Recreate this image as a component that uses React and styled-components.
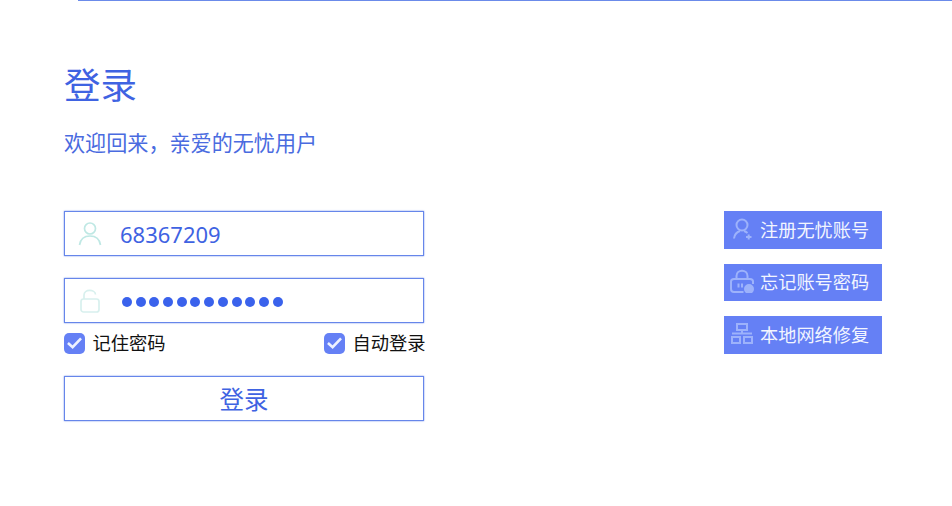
import React from 'react';
import styled, { createGlobalStyle } from 'styled-components';

const GlobalStyle = createGlobalStyle`
	html, body {
		margin: 0;
		padding: 0;
		background: #fff;
	}
	body {
		font-family: "Noto Sans", "Noto Sans CJK SC", sans-serif;
	}
`;

const Page = styled.div`
	width: 952px;
	height: 506px;
	overflow: hidden;
	box-sizing: border-box;
	padding-left: 64px;
	background: #fff;
`;

const TopLine = styled.div`
	height: 1px;
	margin-left: 14px;
	background: #6b8bea;
`;

const Title = styled.h1`
	margin: 59px 0 0;
	height: 50px;
	font-size: 36.5px;
	line-height: 50px;
	font-weight: 400;
	color: #3f63e2;
`;

const Subtitle = styled.p`
	margin: 17px 0 0;
	height: 32px;
	font-size: 21.1px;
	line-height: 32px;
	color: #4a6be0;
`;

const Columns = styled.div`
	display: flex;
	justify-content: space-between;
	align-items: flex-start;
	width: 818px;
	margin-top: 52px;
`;

const Form = styled.form`
	display: flex;
	flex-direction: column;
	width: 360px;
`;

const Field = styled.label`
	display: flex;
	align-items: center;
	box-sizing: border-box;
	height: 45px;
	margin-bottom: ${(p) => p.$gap}px;
	padding-left: 12px;
	border: 1px solid #6686ea;
	box-shadow: 0 0 1.5px #6d8be8;
	background: #fff;
`;

const FieldIcon = styled.svg`
	flex: none;
	width: 26px;
	height: 26px;
	margin-right: 17px;
	fill: none;
	stroke: ${(p) => p.$color};
	stroke-width: 1.7;
`;

const FieldInput = styled.input`
	flex: 1;
	min-width: 0;
	padding: 0;
	border: 0;
	outline: 0;
	background: transparent;
	font-family: "Noto Sans", "Noto Sans CJK SC", sans-serif;
	font-size: 22px;
	color: #3f63e2;
`;

const Dots = styled.div`
	display: flex;
	gap: 3.7px;
	padding: 2px 0 0 2px;
`;

const Dot = styled.span`
	width: 10px;
	height: 10px;
	border-radius: 50%;
	background: #3a62ec;
`;

const Options = styled.div`
	display: flex;
	justify-content: space-between;
	height: 22px;
	margin: 9px -1.5px 22px 0;
`;

const Check = styled.label`
	display: flex;
	align-items: center;
	gap: 7.4px;
	font-size: 18.3px;
	line-height: 22px;
	color: #111;
`;

const CheckBox = styled.span`
	display: flex;
	align-items: center;
	justify-content: center;
	width: 21px;
	height: 21px;
	border-radius: 5px;
	background: #6580f5;
`;

const SubmitButton = styled.button`
	box-sizing: border-box;
	height: 45px;
	padding: 0;
	border: 1px solid #6686ea;
	box-shadow: 0 0 1.5px #6d8be8;
	background: #fff;
	font-family: "Noto Sans CJK SC", sans-serif;
	font-size: 24.5px;
	color: #3f63e2;
`;

const SideLinks = styled.div`
	display: flex;
	flex-direction: column;
	gap: 15px;
	width: 158px;
`;

const SideLink = styled.a`
	display: flex;
	align-items: center;
	gap: 6px;
	box-sizing: border-box;
	height: 37.5px;
	padding: 0 0 2px 6px;
	background: #6580f5;
	font-size: 18.2px;
	color: #f2f5ff;
`;

const SideIcon = styled.svg`
	flex: none;
	width: 24px;
	height: 24px;
	fill: none;
	stroke: #9db2fb;
	stroke-width: 2;
`;

const CheckMark = () => (
	<svg width='17' height='14' viewBox='0 0 18 15'>
		<path d='M2 7.5 L7 12 L16 2.5' fill='none' stroke='#eef2ff' strokeWidth='2.8' />
	</svg>
);

const links = [
	{
		label: '注册无忧账号',
		icon: (
			<>
				<circle cx='12' cy='8' r='5.5' />
				<path d='M4 21.5 C4.5 17.5 7 15 10 14 M14 14 C15.5 14.5 16.5 15.2 17.5 16' />
				<path d='M16 20 H21.5 M18.7 17.5 V22.5' />
			</>
		)
	},
	{
		label: '忘记账号密码',
		icon: (
			<>
				<path d='M6.5 10 V7 C6.5 0 17.5 0 17.5 7 V10' />
				<path d='M13.5 23 H4 C2 23 1 22 1 20 V12.5 C1 11 2 10 4 10 H20 C22 10 23 11 23 12.5 V15' />
				<circle cx='19' cy='20' r='4' fill='#9db2fb' />
				<path d='M8.5 14.5 V18.5 M12 14.5 V18.5' />
			</>
		)
	},
	{
		label: '本地网络修复',
		icon: (
			<>
				<rect x='7' y='2' width='10' height='6' />
				<rect x='2' y='15' width='8' height='6' />
				<rect x='14' y='15' width='8' height='6' />
				<path d='M12 8 V11.5 M2 11.5 H22' />
			</>
		)
	}
];

const App = () => (
	<Page>
		<GlobalStyle />
		<TopLine />
		<Title>登录</Title>
		<Subtitle>欢迎回来，亲爱的无忧用户</Subtitle>
		<Columns>
			<Form>
				<Field $gap={22}>
					<FieldIcon viewBox='0 0 26 26' $color='#bfe8e4'>
						<circle cx='13' cy='7.5' r='5.5' />
						<path d='M2.5 24 C3.5 17.5 8 15 13 15 C18 15 22.5 17.5 23.5 24' />
					</FieldIcon>
					<FieldInput readOnly value='68367209' />
				</Field>
				<Field $gap={0}>
					<FieldIcon viewBox='0 0 26 26' $color='#d8f0ee'>
						<path d='M7 11 V7 C7 1 18 1 18.5 6.5' />
						<rect x='4' y='11' width='18' height='13' rx='2.5' />
					</FieldIcon>
					<Dots>
						{Array.from({ length: 12 }, (_, i) => (
							<Dot key={i} />
						))}
					</Dots>
				</Field>
				<Options>
					<Check>
						<CheckBox>
							<CheckMark />
						</CheckBox>
						记住密码
					</Check>
					<Check>
						<CheckBox>
							<CheckMark />
						</CheckBox>
						自动登录
					</Check>
				</Options>
				<SubmitButton type='button'>登录</SubmitButton>
			</Form>
			<SideLinks>
				{links.map((link) => (
					<SideLink key={link.label}>
						<SideIcon viewBox='0 0 24 24'>{link.icon}</SideIcon>
						{link.label}
					</SideLink>
				))}
			</SideLinks>
		</Columns>
	</Page>
);

export default App;
